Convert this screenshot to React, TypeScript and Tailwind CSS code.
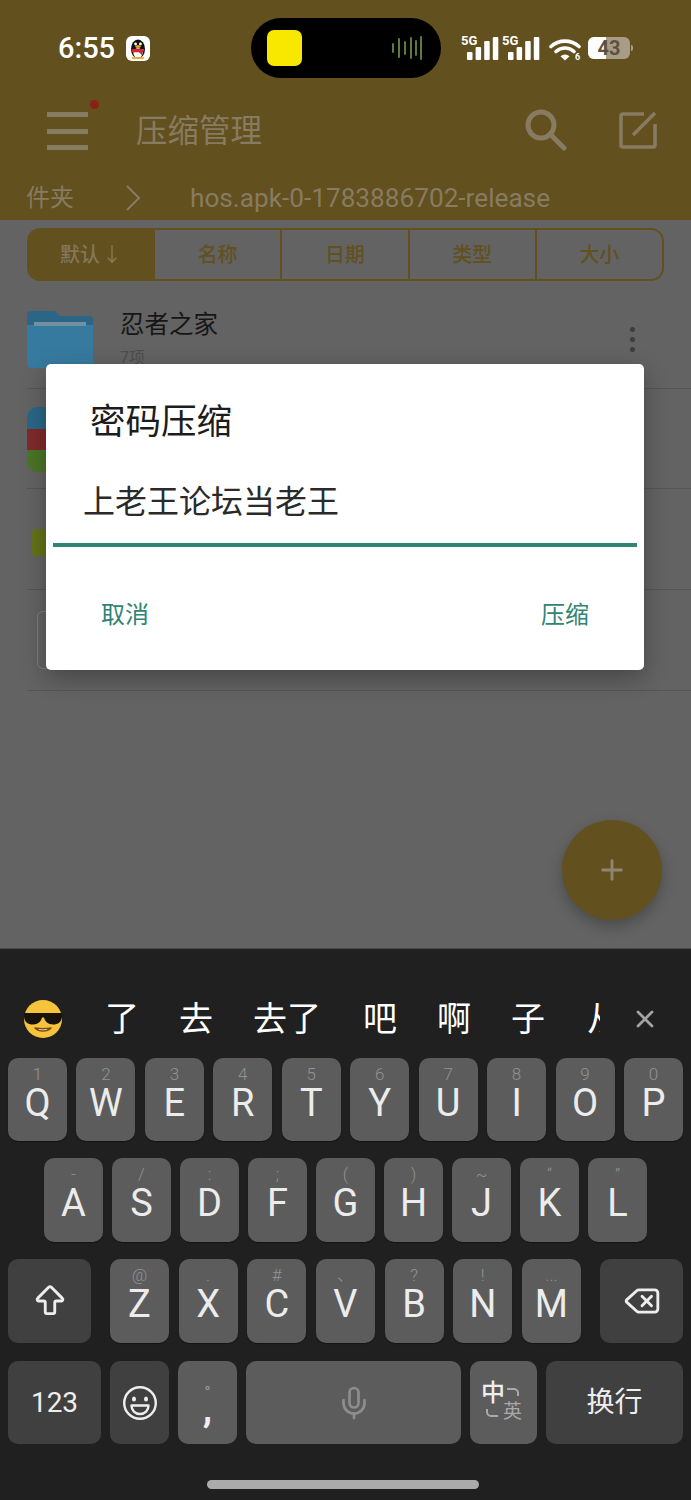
import { ArrowBigUp, Delete, Mic, Plus, X } from "lucide-react";

const cjk = "font-['Roboto','Noto_Sans_CJK_SC',sans-serif]";

const row1 = [["Q", "1"], ["W", "2"], ["E", "3"], ["R", "4"], ["T", "5"], ["Y", "6"], ["U", "7"], ["I", "8"], ["O", "9"], ["P", "0"]];
const row2 = [["A", "-"], ["S", "/"], ["D", ":"], ["F", ";"], ["G", "("], ["H", ")"], ["J", "~"], ["K", "“"], ["L", "”"]];
const row3 = [["Z", "@"], ["X", "."], ["C", "#"], ["V", "、"], ["B", "?"], ["N", "!"], ["M", "..."]];
const tabs = ["名称", "日期", "类型", "大小"];

function Key({ label, hint }: { label: string; hint: string }) {
  return (
    <div className="flex h-full w-[59px] flex-col items-center rounded-[10px] bg-[#5c5c5c] pt-[7px] shadow-[0_1px_1px_#151515]">
      <span className="h-[18px] text-[17px] leading-[18px] font-light text-[#929292]">{hint}</span>
      <span className="text-[38px] leading-[40px] text-[#ececec]">{label}</span>
    </div>
  );
}

function SignalBars({ x }: { x: number }) {
  return (
    <g fill="#fff">
      <rect x={x} y="16" width="5.5" height="8" rx="1" />
      <rect x={x + 8.6} y="11" width="5.5" height="13" rx="1" />
      <rect x={x + 17.2} y="5" width="5.5" height="19" rx="1" />
      <rect x={x + 25.8} y="1" width="5.5" height="23" rx="1" />
    </g>
  );
}

function StatusIcons() {
  return (
    <div className="absolute top-[36px] left-[461px] h-[25px] w-[175px]">
      <svg width="120" height="25" viewBox="0 0 120 25" className="absolute top-0 left-0">
        <SignalBars x={6} />
        <SignalBars x={47} />
        <path d="M90 10.5a21 21 0 0 1 28 0" fill="none" stroke="#fff" strokeWidth="3.6" strokeLinecap="round" />
        <path d="M95 15.5a13.5 13.5 0 0 1 18 0" fill="none" stroke="#fff" strokeWidth="3.6" strokeLinecap="round" />
        <path d="M99.5 20.2a7 7 0 0 1 9 0L104 24.6Z" fill="#fff" />
      </svg>
      <span className="absolute top-[-1px] left-0 text-[13px] leading-[12px] font-bold text-white">5G</span>
      <span className="absolute top-[-1px] left-[41px] text-[13px] leading-[12px] font-bold text-white">5G</span>
      <span className="absolute top-[16px] left-[114px] text-[9px] leading-[10px] font-bold text-white">6</span>
      <div className="absolute top-[1px] left-[127px] flex h-[22px] w-[42px] overflow-hidden rounded-[6px] bg-[#a89c85]">
        <div className="w-[18px] bg-white" />
      </div>
      <span className="absolute top-[1px] left-[127px] w-[42px] text-center text-[20px] leading-[22px] font-bold text-[#5b5140]">43</span>
      <div className="absolute top-[9px] left-[170px] h-[6px] w-[2px] rounded-r bg-[#a89c85]" />
    </div>
  );
}

function QQIcon() {
  return (
    <svg width="24" height="25" viewBox="0 0 24 25" className="ml-[11px]">
      <rect width="24" height="25" rx="6" fill="#fff" />
      <ellipse cx="12" cy="13" rx="7" ry="9.5" fill="#111" />
      <ellipse cx="12" cy="17" rx="4.6" ry="4.8" fill="#fff" />
      <circle cx="9.6" cy="8" r="1.4" fill="#fff" />
      <circle cx="14.4" cy="8" r="1.4" fill="#fff" />
      <ellipse cx="12" cy="10.6" rx="2.8" ry="1.3" fill="#f0b020" />
      <path d="M6 13h12v2.2l-2 .4v3.6l-3-3H6Z" fill="#d8262c" />
      <ellipse cx="8.5" cy="22" rx="2.6" ry="1.2" fill="#f0b020" />
      <ellipse cx="15.5" cy="22" rx="2.6" ry="1.2" fill="#f0b020" />
    </svg>
  );
}

function Island() {
  return (
    <div className="absolute top-[18px] left-[251px] flex h-[60px] w-[190px] items-center justify-between rounded-full bg-black pr-[19px] pl-[16px]">
      <div className="h-[36px] w-[35px] rounded-[7px] bg-[#f8e800]" />
      <svg width="30" height="24" viewBox="0 0 30 24" stroke="#5f7a3a" strokeWidth="2" strokeLinecap="round">
        <path d="M1 8v8M7 3v18M13 6v12M19 2v20M24 5v14M29 1v22" />
      </svg>
    </div>
  );
}

function Header() {
  return (
    <header className="relative h-[220px] shrink-0 bg-[#62501e] text-[#877b62]">
      <div className="flex h-[96px] items-center pl-[58px] text-white">
        <span className="text-[29px] leading-[34px] font-medium">6:55</span>
        <QQIcon />
      </div>
      <Island />
      <StatusIcons />
      <div className="flex h-[68px] items-center pr-[34px] pl-[47px]">
        <div className="relative mt-[2px] flex h-[38px] w-[41px] flex-col justify-between">
          <div className="h-[5px] bg-[#877b62]" />
          <div className="h-[5px] bg-[#877b62]" />
          <div className="h-[5px] bg-[#877b62]" />
          <div className="absolute top-[-12px] left-[43px] h-[9px] w-[9px] rounded-full bg-[#8e1f14]" />
        </div>
        <span className="mt-[4px] ml-[48px] text-[31.5px] leading-[40px]">压缩管理</span>
        <svg width="42" height="42" viewBox="0 0 42 42" fill="none" stroke="#877b62" strokeWidth="5" className="mr-[52px] ml-auto">
          <circle cx="16" cy="16" r="13" />
          <path d="M25 25l14 14" strokeLinecap="round" />
        </svg>
        <svg width="38" height="38" viewBox="0 0 38 38" fill="none" stroke="#877b62" strokeWidth="3.6">
          <path d="M25 3H4a2 2 0 0 0-2 2v29a2 2 0 0 0 2 2h30a2 2 0 0 0 2-2V13" />
          <path d="M14 24L36 2" />
        </svg>
      </div>
      <div className="flex h-[56px] items-center pt-[12px] pl-[26px]">
        <span className="w-[99px] text-[24px] leading-[32px]">件夹</span>
        <svg width="16" height="26" viewBox="0 0 16 26" fill="none" stroke="#877b62" strokeWidth="2">
          <path d="M2 1l12 12L2 25" />
        </svg>
        <span className="ml-[49px] text-[26.2px] leading-[32px] whitespace-nowrap">hos.apk-0-1783886702-release</span>
      </div>
    </header>
  );
}

function SortTabs() {
  return (
    <div className="mx-[27px] mt-[8px] flex h-[53px] overflow-hidden rounded-[13px] border-2 border-[#62501e] text-[20px] font-medium text-[#62501e]">
      <div className="flex w-[124px] items-center justify-center gap-[2px] bg-[#62501e] text-[#85775a]">
        默认<span className="font-normal">↓</span>
      </div>
      {tabs.map((t) => (
        <div key={t} className="flex flex-1 items-center justify-center border-l-2 border-[#62501e]">
          {t}
        </div>
      ))}
    </div>
  );
}

function FolderIcon() {
  return (
    <svg width="66" height="57" viewBox="0 0 66 57">
      <path d="M0 4a4 4 0 0 1 4-4h24l5 5h29a4 4 0 0 1 4 4v44a4 4 0 0 1-4 4H4a4 4 0 0 1-4-4Z" fill="#2b6687" />
      <path d="M0 14h66v39a4 4 0 0 1-4 4H4a4 4 0 0 1-4-4Z" fill="#377a9f" />
      <rect x="7" y="11" width="52" height="4" fill="#7390a0" />
    </svg>
  );
}

function FileRows() {
  return (
    <div className="mt-[7px] ml-[27px] flex flex-col">
      <div className="relative h-[101px] border-b border-[#565656]">
        <div className="flex items-start pt-[23px]">
          <FolderIcon />
          <div className="ml-[27px] flex flex-col">
            <span className="mt-[-4px] text-[24.5px] leading-[36px] text-[#161616]">忍者之家</span>
            <span className="mt-[4px] text-[16px] leading-[22px] text-[#4d4d4d]">7项</span>
          </div>
        </div>
        <div className="absolute top-[39px] left-[603px] flex flex-col gap-[5px]">
          <div className="h-[5px] w-[5px] rounded-full bg-[#3d3d3d]" />
          <div className="h-[5px] w-[5px] rounded-full bg-[#3d3d3d]" />
          <div className="h-[5px] w-[5px] rounded-full bg-[#3d3d3d]" />
        </div>
      </div>
      <div className="h-[100px] border-b border-[#565656] pt-[18px]">
        <div className="flex h-[65px] w-[40px] flex-col overflow-hidden rounded-[10px]">
          <div className="flex-1 bg-[#2b6687]" />
          <div className="flex-1 bg-[#802a2a]" />
          <div className="flex-1 bg-[#4a7528]" />
        </div>
      </div>
      <div className="h-[101px] border-b border-[#565656] pt-[40px] pl-[5px]">
        <div className="h-[27px] w-[14px] rounded-[4px] bg-[#637318]" />
      </div>
      <div className="h-[101px] border-b border-[#565656] pt-[21px] pl-[10px]">
        <div className="h-[58px] w-[40px] rounded-[6px] border border-[#7d7d7d]" />
      </div>
    </div>
  );
}

function PasswordDialog() {
  return (
    <div className="absolute top-[364px] left-[46px] flex h-[306px] w-[598px] flex-col rounded-[5px] bg-white shadow-[0_8px_24px_rgba(0,0,0,0.3)]">
      <div className="flex h-[114px] items-center pt-[2px] pl-[44px] text-[35.500px] leading-[46px] text-[#1c1c1c]">密码压缩</div>
      <div className="mx-[7px] h-[69px] border-b-[4px] border-[#2f8573] pl-[30px] text-[32px] leading-[48px] text-[#2a2a2a]">上老王论坛当老王</div>
      <div className="flex flex-1 items-center justify-between px-[55px] pt-[13px] text-[24px] text-[#2f8573]">
        <span>取消</span>
        <span>压缩</span>
      </div>
    </div>
  );
}

function SunglassesEmoji() {
  return (
    <svg width="40" height="38" viewBox="0 0 40 38" className="shrink-0">
      <circle cx="20" cy="19" r="19" fill="#f6c33c" />
      <path d="M1 13h38v3c0 6-4 8.500-9 8.500s-8-3-9-7h-2c-1 4-4 7-9 7s-9-2.500-9-8.500Z" fill="#17130c" />
      <path d="M12 28c4 4 12 4 16 0-5 1-11 1-16 0Z" fill="#fff" stroke="#7a4a12" strokeWidth="1.5" strokeLinejoin="round" />
    </svg>
  );
}

function SmileIcon() {
  return (
    <svg width="36" height="36" viewBox="0 0 36 36" fill="none" stroke="#eee" strokeWidth="2.4">
      <circle cx="18" cy="18" r="15.800" />
      <ellipse cx="12" cy="14" rx="2" ry="2.600" fill="#eee" stroke="none" />
      <ellipse cx="24" cy="14" rx="2" ry="2.600" fill="#eee" stroke="none" />
      <path d="M9.500 20.500h17c0 5-3.500 8.500-8.500 8.500s-8.500-3.500-8.500-8.500Z" strokeLinejoin="round" />
    </svg>
  );
}

function Keyboard() {
  return (
    <div className={`h-[552px] shrink-0 border-t border-[#4a4a4a] bg-[#202020] ${cjk}`}>
      <div className="flex h-[109px] items-center pt-[30px] pr-[32px] pl-[23px] text-[34px] leading-[40px] text-white">
        <SunglassesEmoji />
        <span className="ml-[42px]">了</span>
        <span className="ml-[40px]">去</span>
        <span className="ml-[40px] whitespace-nowrap">去了</span>
        <span className="ml-[42px]">吧</span>
        <span className="ml-[40px]">啊</span>
        <span className="ml-[40px]">子</span>
        <span className="ml-[42px] w-[13px] overflow-hidden whitespace-nowrap">从</span>
        <X size={28} strokeWidth={2.4} color="#a3a3a3" className="ml-auto shrink-0" />
      </div>
      <div className="flex flex-col gap-[17px]">
        <div className="flex h-[83px] justify-between px-[8px]">
          {row1.map(([l, h]) => (
            <Key key={l} label={l} hint={h} />
          ))}
        </div>
        <div className="flex h-[84px] justify-between px-[44px]">
          {row2.map(([l, h]) => (
            <Key key={l} label={l} hint={h} />
          ))}
        </div>
        <div className="flex h-[84px] items-stretch px-[8px]">
          <div className="flex w-[83px] items-center justify-center rounded-[10px] bg-[#404040]">
            <ArrowBigUp size={38} strokeWidth={1.8} color="#eee" />
          </div>
          <div className="mx-[19px] flex flex-1 justify-between">
            {row3.map(([l, h]) => (
              <Key key={l} label={l} hint={h} />
            ))}
          </div>
          <div className="flex w-[83px] items-center justify-center rounded-[10px] bg-[#404040]">
            <Delete size={38} strokeWidth={1.8} color="#eee" />
          </div>
        </div>
        <div className="mt-[1px] flex h-[83px] gap-[9px] px-[8px]">
          <div className="flex w-[93px] items-center justify-center rounded-[10px] bg-[#404040] text-[28px] text-[#eee]">123</div>
          <div className="flex w-[59px] items-center justify-center rounded-[10px] bg-[#404040]">
            <SmileIcon />
          </div>
          <div className="flex w-[59px] flex-col items-center rounded-[10px] bg-[#5c5c5c] pt-[21px]">
            <span className="h-[20px] text-[17px] leading-[20px] text-[#9a9a9a]">°</span>
            <span className="text-[38px] leading-[14px] font-bold text-[#eee]">,</span>
          </div>
          <div className="flex w-[215px] items-center justify-center rounded-[10px] bg-[#5c5c5c]">
            <Mic size={36} strokeWidth={1.8} color="#8d8d8d" />
          </div>
          <div className="relative w-[67px] rounded-[10px] bg-[#5c5c5c]">
            <span className="absolute top-[18px] left-[11px] text-[24px] leading-[28px] font-medium text-[#eee]">中</span>
            <span className="absolute top-[39px] left-[33px] text-[19px] leading-[24px] text-[#a9a9a9]">英</span>
            <svg width="52" height="32" viewBox="0 0 52 32" fill="none" stroke="#a9a9a9" strokeWidth="2" className="absolute top-[26px] left-[15px]">
              <path d="M22 2h7a4 4 0 0 1 4 4v3" />
              <path d="M2 22v3a4 4 0 0 0 4 4h7" />
            </svg>
          </div>
          <div className="flex w-[137px] items-center justify-center rounded-[10px] bg-[#404040] text-[28px] text-[#eee]">换行</div>
        </div>
      </div>
      <div className="mt-[36px] ml-[207px] h-[9px] w-[272px] rounded-full bg-[#ababab]" />
    </div>
  );
}

export default function App() {
  return (
    <div className={`relative flex h-[1500px] w-[691px] flex-col overflow-hidden bg-[#636363] ${cjk}`}>
      <Header />
      <main className="flex-1">
        <SortTabs />
        <FileRows />
      </main>
      <div className="absolute top-[820px] left-[562px] flex h-[100px] w-[100px] items-center justify-center rounded-full bg-[#62501e] shadow-[0_6px_14px_rgba(0,0,0,0.25)]">
        <Plus size={32} strokeWidth={2.2} color="#8f8570" />
      </div>
      <PasswordDialog />
      <Keyboard />
    </div>
  );
}
